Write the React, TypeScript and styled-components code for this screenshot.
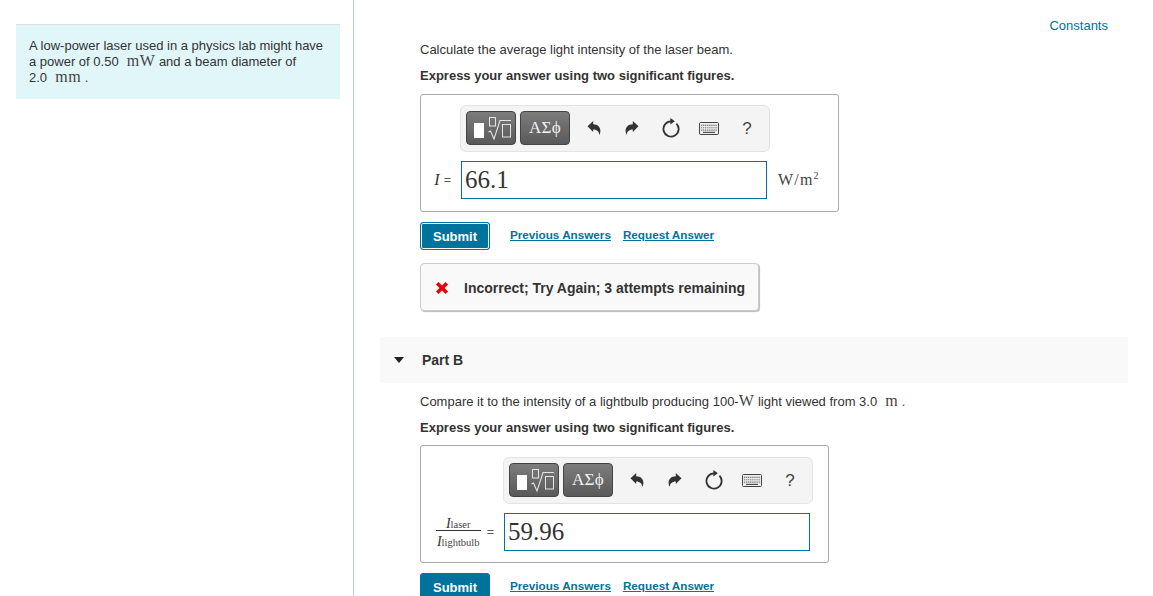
import styled, { createGlobalStyle } from 'styled-components';

const GlobalStyle = createGlobalStyle`
  html, body {
    margin: 0;
    padding: 0;
    background: #fff;
  }
  body {
    font-family: "Liberation Sans", Arial, sans-serif;
    color: #333;
    overflow: hidden;
  }
`;

const UndoIcon = ({ flip }: { flip?: boolean }) => (
  <svg width="14" height="16" viewBox="0 0 14 16" style={flip ? { transform: 'scaleX(-1)' } : undefined}>
    <path d="M0.5 6.2 L6.2 1 V4.2 C10.6 4.2 13.6 7 13.4 11.2 C13.3 12.6 13 13.8 12.4 15 C12.2 11.6 10 9.4 6.2 9.4 V12 Z" fill="#333" />
  </svg>
);

const ResetIcon = () => (
  <svg width="18" height="20" viewBox="0 0 18 20">
    <path d="M9 3.4 A7.6 7.6 0 1 0 14.4 5.6" fill="none" stroke="#333" strokeWidth="1.8" />
    <path d="M8.4 0 L12.8 3.2 L8.4 6.4 Z" fill="#333" />
  </svg>
);

const KeyboardIcon = () => (
  <svg width="20" height="13" viewBox="0 0 20 13">
    <rect x="0.5" y="0.5" width="19" height="12" rx="1" fill="#ececec" stroke="#444" />
    <path d="M2 3.4h16M2 5.8h16M2 8.1h16" stroke="#777" strokeWidth="1.1" strokeDasharray="1.2 .7" />
    <path d="M4 10.4h12" stroke="#555" strokeWidth="1.2" />
  </svg>
);

const TemplateIcon = () => (
  <svg width="48" height="32" viewBox="0 0 48 32">
    <rect x="7" y="11" width="10" height="15" fill="#fff" />
    <rect x="22.5" y="5.5" width="6" height="8.5" fill="none" stroke="#e4e4e4" />
    <path d="M21.5 20 L23.5 19 L27 27 L33 8.5 H44" fill="none" stroke="#e4e4e4" strokeWidth="1.1" />
    <rect x="35.5" y="12.5" width="8" height="12.5" fill="none" stroke="#e4e4e4" />
  </svg>
);

const CrossIcon = () => (
  <svg width="14" height="14" viewBox="0 0 14 14">
    <path d="M2.2 2.2 L11.8 11.8 M11.8 2.2 L2.2 11.8" stroke="#e8000b" strokeWidth="3.6" />
  </svg>
);

const Toolbar = () => (
  <ToolbarBar>
    <PaletteButton $wide>
      <TemplateIcon />
    </PaletteButton>
    <PaletteButton>AΣϕ</PaletteButton>
    <ToolSlot $w={38} $first>
      <UndoIcon />
    </ToolSlot>
    <ToolSlot $w={38}>
      <UndoIcon flip />
    </ToolSlot>
    <ToolSlot $w={40}>
      <ResetIcon />
    </ToolSlot>
    <ToolSlot $w={36}>
      <KeyboardIcon />
    </ToolSlot>
    <ToolSlot $w={40}>
      <HelpMark>?</HelpMark>
    </ToolSlot>
  </ToolbarBar>
);

const ActionRow = ({ focused }: { focused?: boolean }) => (
  <Actions>
    <SubmitButton $focused={focused}>Submit</SubmitButton>
    <ActionLink>Previous Answers</ActionLink>
    <ActionLink>Request Answer</ActionLink>
  </Actions>
);

export default function App() {
  return (
    <>
      <GlobalStyle />
      <Page>
        <Sidebar>
          <Intro>
            A low-power laser used in a physics lab might have
            <br />a power of 0.50 <MathUnit>&nbsp;mW</MathUnit> and a beam diameter of
            <br />
            2.0 <MathUnit>&nbsp;mm</MathUnit> .
          </Intro>
        </Sidebar>
        <Main>
          <ConstantsRow>
            <ConstantsLink>Constants</ConstantsLink>
          </ConstantsRow>
          <PartBody>
            <Prompt $top={6}>Calculate the average light intensity of the laser beam.</Prompt>
            <Instruction>Express your answer using two significant figures.</Instruction>
            <AnswerBox $width={419} $top={9} $pad={10}>
              <ToolbarRow $indent={40}>
                <Toolbar />
              </ToolbarRow>
              <InputRow>
                <SymbolLabel $width={40}>
                  <MathVar>I</MathVar>
                  <Equals>=</Equals>
                </SymbolLabel>
                <ValueInput>66.1</ValueInput>
                <UnitLabel>
                  W/m<Sup>2</Sup>
                </UnitLabel>
              </InputRow>
            </AnswerBox>
            <ActionRow focused />
            <Feedback>
              <CrossIcon />
              <FeedbackText>Incorrect; Try Again; 3 attempts remaining</FeedbackText>
            </Feedback>
          </PartBody>
          <PartHeader>
            <Caret />
            <PartTitle>Part B</PartTitle>
          </PartHeader>
          <PartBody>
            <Prompt $top={10}>
              Compare it to the intensity of a lightbulb producing 100-<MathUnit>W</MathUnit> light viewed from 3.0{' '}
              <MathUnit>&nbsp;m</MathUnit> .
            </Prompt>
            <Instruction>Express your answer using two significant figures.</Instruction>
            <AnswerBox $width={409} $top={8} $pad={11}>
              <ToolbarRow $indent={83}>
                <Toolbar />
              </ToolbarRow>
              <InputRow>
                <SymbolLabel $width={83}>
                  <Fraction>
                    <Numerator>
                      <FractionVar>I</FractionVar>
                      <Sub>laser</Sub>
                    </Numerator>
                    <Denominator>
                      <FractionVar>I</FractionVar>
                      <Sub>lightbulb</Sub>
                    </Denominator>
                  </Fraction>
                  <Equals>=</Equals>
                </SymbolLabel>
                <ValueInput>59.96</ValueInput>
              </InputRow>
            </AnswerBox>
            <ActionRow />
          </PartBody>
        </Main>
      </Page>
    </>
  );
}

const Page = styled.div`
  display: flex;
  height: 596px;
  overflow: hidden;
`;

const Sidebar = styled.aside`
  flex: 0 0 354px;
  height: 596px;
  box-sizing: border-box;
  border-right: 1px solid #c3ccd4;
  padding-top: 24px;
`;

const Intro = styled.div`
  width: 324px;
  height: 75px;
  box-sizing: border-box;
  margin-left: 16px;
  padding: 13px 13px 0;
  background: #e1f6f9;
  border-top: 1px solid #d9e3e5;
  font-size: 13px;
  line-height: 16px;
  color: #333;
  white-space: nowrap;
`;

const MathUnit = styled.span`
  font-family: "Liberation Serif", serif;
  font-size: 16px;
  line-height: 0;
  letter-spacing: 0.5px;
  color: #444;
`;

const Main = styled.main`
  flex: 1;
  padding-left: 26px;
  min-width: 0;
`;

const ConstantsRow = styled.div`
  display: flex;
  justify-content: flex-end;
  width: 728px;
  height: 18px;
  padding-top: 17px;
  line-height: 18px;
`;

const ConstantsLink = styled.a`
  font-size: 13px;
  color: #00739c;
`;

const PartBody = styled.section`
  padding-left: 40px;
`;

const Prompt = styled.p<{ $top: number }>`
  margin: ${({ $top }) => $top}px 0 0;
  font-size: 13px;
  line-height: 18px;
  height: 18px;
  color: #333;
  white-space: nowrap;
`;

const Instruction = styled.p`
  margin: 8px 0 0;
  font-size: 13px;
  font-weight: 700;
  line-height: 18px;
  color: #333;
`;

const AnswerBox = styled.div<{ $width: number; $top: number; $pad: number }>`
  box-sizing: border-box;
  width: ${({ $width }) => $width}px;
  height: 118px;
  margin-top: ${({ $top }) => $top}px;
  padding-top: ${({ $pad }) => $pad}px;
  border: 1px solid #aaa;
  border-radius: 3px;
`;

const ToolbarRow = styled.div<{ $indent: number }>`
  padding-left: ${({ $indent }) => $indent - 1}px;
`;

const ToolbarBar = styled.div`
  box-sizing: border-box;
  display: flex;
  align-items: flex-start;
  width: 310px;
  height: 47px;
  padding: 5px 0 0 5px;
  background: #f4f4f4;
  border: 1px solid #e3e3e3;
  border-radius: 6px;
`;

const PaletteButton = styled.div<{ $wide?: boolean }>`
  box-sizing: border-box;
  display: flex;
  align-items: center;
  justify-content: center;
  width: 50px;
  height: 34px;
  margin-right: ${({ $wide }) => ($wide ? 4 : 0)}px;
  background: linear-gradient(#7c7c7c, #5a5a5a);
  border: 1px solid #444;
  border-radius: 4px;
  color: #f2f2f2;
  font-family: "Liberation Serif", serif;
  font-size: 17px;
  letter-spacing: 0.3px;
`;

const ToolSlot = styled.div<{ $w: number; $first?: boolean }>`
  display: flex;
  align-items: center;
  justify-content: center;
  flex: 0 0 ${({ $w }) => $w}px;
  height: 34px;
  margin-left: ${({ $first }) => ($first ? 5 : 0)}px;
`;

const HelpMark = styled.span`
  font-size: 17px;
  color: #444;
  line-height: 1;
`;

const InputRow = styled.div`
  display: flex;
  align-items: center;
  height: 38px;
  margin-top: 9px;
`;

const SymbolLabel = styled.div<{ $width: number }>`
  box-sizing: border-box;
  display: flex;
  align-items: center;
  justify-content: flex-end;
  flex: 0 0 ${({ $width }) => $width}px;
  padding-right: 10px;
  gap: 4px;
  color: #333;
`;

const MathVar = styled.i`
  font-family: "Liberation Serif", serif;
  font-size: 16px;
`;

const FractionVar = styled.i`
  font-family: "Liberation Serif", serif;
  font-size: 14px;
`;

const Equals = styled.span`
  font-size: 12.5px;
  color: #555;
`;

const ValueInput = styled.div`
  box-sizing: border-box;
  width: 306px;
  height: 38px;
  padding-left: 3px;
  border: 1px solid #00739c;
  font-family: "Liberation Serif", serif;
  font-size: 25px;
  line-height: 36px;
  color: #333;
`;

const UnitLabel = styled.span`
  margin-left: 11px;
  font-family: "Liberation Serif", serif;
  font-size: 16px;
  letter-spacing: 1.2px;
  color: #444;
  white-space: nowrap;
`;

const Sup = styled.sup`
  font-size: 10px;
  line-height: 0;
`;

const Fraction = styled.div`
  display: flex;
  flex-direction: column;
  align-items: center;
  width: 45px;
  margin-right: 2px;
  line-height: 15px;
`;

const Numerator = styled.div`
  box-sizing: border-box;
  width: 100%;
  height: 17px;
  padding-top: 1px;
  border-bottom: 1px solid #333;
  text-align: center;
  white-space: nowrap;
`;

const Denominator = styled.div`
  height: 19px;
  padding-top: 2px;
  box-sizing: border-box;
  white-space: nowrap;
`;

const Sub = styled.span`
  font-family: "Liberation Serif", serif;
  font-size: 10.5px;
  color: #444;
`;

const Actions = styled.div`
  display: flex;
  align-items: center;
  height: 28px;
  margin-top: 10px;
`;

const SubmitButton = styled.button<{ $focused?: boolean }>`
  box-sizing: border-box;
  width: 70px;
  height: 28px;
  margin-right: 20px;
  padding: 0;
  background: #00739c;
  border: 1px solid #00739c;
  box-shadow: ${({ $focused }) => ($focused ? 'inset 0 0 0 1px #fff' : 'none')};
  border-radius: 3px;
  color: #fff;
  font-family: "Liberation Sans", Arial, sans-serif;
  font-size: 13px;
  font-weight: 700;
`;

const ActionLink = styled.a`
  margin: 0 12px 3px 0;
  font-size: 11.7px;
  font-weight: 700;
  color: #00739c;
  text-decoration: underline;
`;

const Feedback = styled.div`
  box-sizing: border-box;
  display: flex;
  align-items: center;
  width: 339px;
  height: 48px;
  margin-top: 13px;
  padding: 1px 0 0 14px;
  background: #f9f9f9;
  border: 1px solid #ccc;
  border-radius: 4px;
  box-shadow: 1px 1px 1px #bbb;
`;

const FeedbackText = styled.span`
  margin-left: 15px;
  font-size: 14px;
  font-weight: 700;
  color: #333;
  white-space: nowrap;
`;

const PartHeader = styled.header`
  display: flex;
  align-items: center;
  width: 748px;
  height: 46px;
  margin-top: 26px;
  background: #f9f9f9;
`;

const Caret = styled.span`
  width: 0;
  height: 0;
  margin-left: 14px;
  border-left: 5.5px solid transparent;
  border-right: 5.5px solid transparent;
  border-top: 6px solid #222;
`;

const PartTitle = styled.span`
  margin-left: 18px;
  font-size: 14px;
  font-weight: 700;
  color: #333;
`;
